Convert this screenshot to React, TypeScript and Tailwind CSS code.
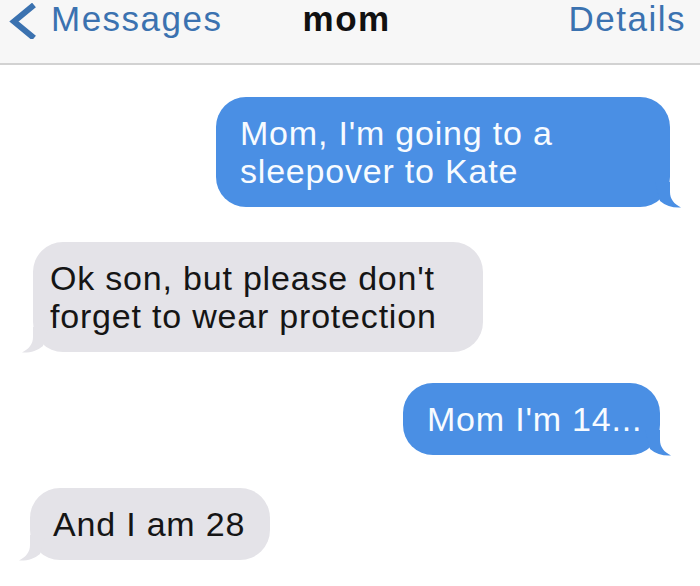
const BLUE = "bg-[#4a8fe4]";

function Tail({ side, color }: { side: "right" | "left"; color: string }) {
  // small iMessage-style hook at the bottom corner of a bubble
  if (side === "right") {
    return (
      <svg
        className="absolute -right-[13px] -bottom-[1px]"
        width="28"
        height="26"
        viewBox="0 0 28 26"
      >
        <path d="M0 0 H15 V10 C15 17 19 22 26 25.5 C18 26 11 24 5 19 Z" fill={color} />
      </svg>
    );
  }
  return (
    <svg
      className="absolute -left-[13px] -bottom-[1px]"
      width="28"
      height="26"
      viewBox="0 0 28 26"
    >
      <path d="M28 0 H13 V10 C13 17 9 22 2 25.5 C10 26 17 24 23 19 Z" fill={color} />
    </svg>
  );
}

type Msg = {
  id: number;
  text: string;
  mine: boolean;
  width: string;
  edge: string;
  top: string;
  pl: string;
};

const messages: Msg[] = [
  { id: 1, text: "Mom, I'm going to a sleepover to Kate", mine: true, width: "w-[454px]", edge: "mr-[30px]", top: "mt-[32px]", pl: "pl-[24px]" },
  { id: 2, text: "Ok son, but please don't forget to wear protection", mine: false, width: "w-[450px]", edge: "ml-[33px]", top: "mt-[35px]", pl: "pl-[17px]" },
  { id: 3, text: "Mom I'm 14...", mine: true, width: "w-[257px]", edge: "mr-[40px]", top: "mt-[31px]", pl: "pl-[24px]" },
  { id: 4, text: "And I am 28", mine: false, width: "w-[240px]", edge: "ml-[30px]", top: "mt-[33px]", pl: "pl-[23px]" },
];

export default function App() {
  return (
    <div
      className="w-[700px] h-[586px] bg-white overflow-hidden flex flex-col"
      style={{ fontFamily: '"Liberation Sans", Arial, sans-serif' }}
    >
      {/* nav bar */}
      <div className="h-[65px] shrink-0 bg-[#f7f7f7] border-b-2 border-[#d2d2d2] flex items-start pt-[1px] text-[35px] leading-[35px] tracking-[1.5px]">
        <svg className="ml-[8px] mt-[2px]" width="30" height="36" viewBox="0 0 30 36">
          <path d="M26 2 L6 18.5 L26 35" fill="none" stroke="#3b72b0" strokeWidth="6" strokeLinejoin="miter" />
        </svg>
        <span className="ml-[13px] text-[#3b72b0]">Messages</span>
        <span className="ml-[80px] font-bold text-[#111]">mom</span>
        <span className="ml-auto mr-[14px] text-[#3b72b0]">Details</span>
      </div>

      {/* conversation */}
      <div className="flex flex-col text-[34px] leading-[38px] tracking-[0.8px]">
        {messages.map((m) => (
          <div key={m.id} className={`flex ${m.mine ? "justify-end" : "justify-start"} ${m.top}`}>
            <div
              className={`relative ${m.width} ${m.edge} ${m.pl} pr-[16px] py-[17px] rounded-[30px] ${
                m.mine ? `${BLUE} text-[#f7fbff]` : "bg-[#e4e3e8] text-[#151515]"
              }`}
            >
              {m.text}
              <Tail side={m.mine ? "right" : "left"} color={m.mine ? "#4a8fe4" : "#e4e3e8"} />
            </div>
          </div>
        ))}
      </div>
    </div>
  );
}
